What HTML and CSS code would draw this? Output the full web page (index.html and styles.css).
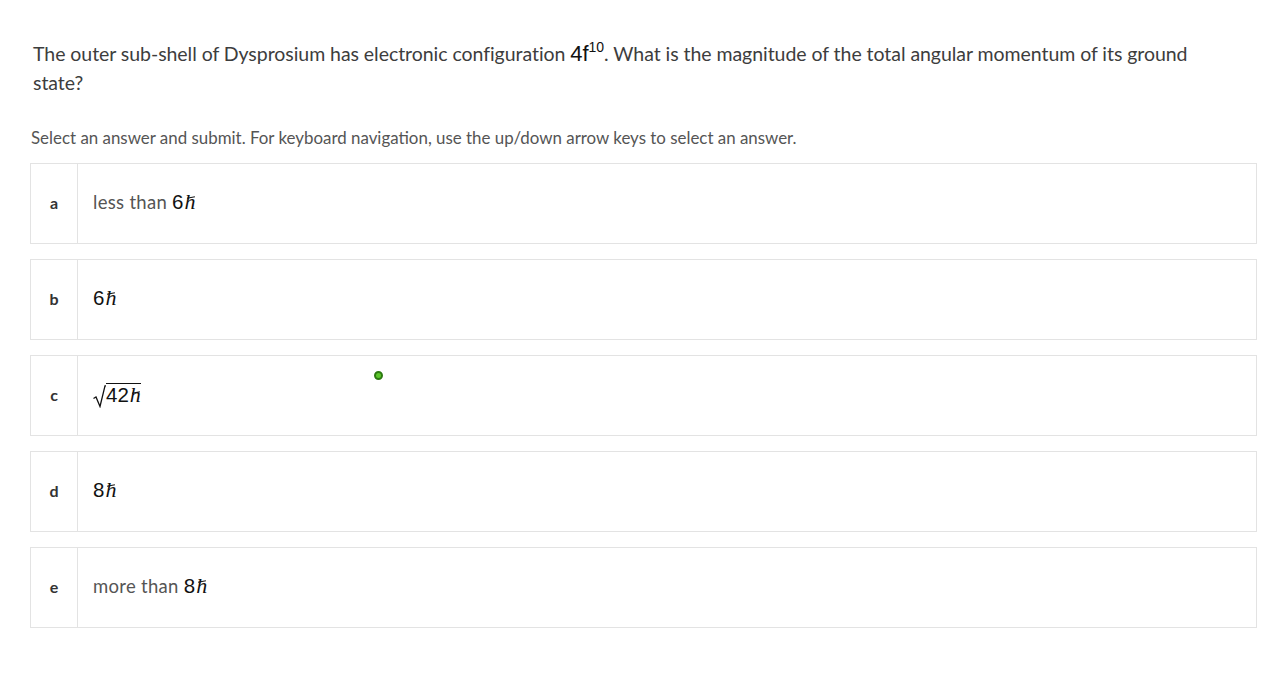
FILE: index.html
```html
<!DOCTYPE html>
<html>
<head>
<meta charset="utf-8">
<link rel="stylesheet" href="styles.css">
</head>
<body>
<div class="page">
  <p class="question">The outer sub-shell of Dysprosium has electronic configuration <span class="m-conf">4f<span class="sup">10</span></span>. What is the magnitude of the total angular momentum of its ground state?</p>
  <p class="hint">Select an answer and submit. For keyboard navigation, use the up/down arrow keys to select an answer.</p>
  <div class="answers">
    <div class="answer"><div class="label">a</div><div class="body">less than <span class="math"><span class="num">6</span><span class="hbar">h</span></span></div></div>
    <div class="answer"><div class="label">b</div><div class="body"><span class="math"><span class="num">6</span><span class="hbar">h</span></span></div></div>
    <div class="answer"><div class="label">c</div><div class="body"><span class="math"><svg class="radical" width="13" height="23" viewBox="0 0 13 23"><path d="M0.5 13.5 L3 12 L7 21.5 L12 0.8 L13 0.8" fill="none" stroke="#111" stroke-width="1.3"/></svg><span class="rad"><span class="num">42</span><span class="hbar">h</span></span></span></div></div>
    <div class="answer"><div class="label">d</div><div class="body"><span class="math"><span class="num">8</span><span class="hbar">h</span></span></div></div>
    <div class="answer"><div class="label">e</div><div class="body">more than <span class="math"><span class="num">8</span><span class="hbar">h</span></span></div></div>
  </div>
  <div class="cursor"></div>
</div>
</body>
</html>
```
FILE: styles.css
```css
* { box-sizing: border-box; }
html, body { margin: 0; padding: 0; background: #fff; }
body { font-family: Lato, "Open Sans", sans-serif; color: #444; }
.page { position: relative; padding: 39px 24px 0 30px; width: 1281px; height: 681px; }
.question { margin: 0 0 0 3px; font-size: 19.5px; line-height: 29px; color: #3d3d3d; width: 1200px; letter-spacing: -0.05px; }
.m-conf { font-family: "Liberation Sans", sans-serif; font-size: 22px; line-height: 20px; color: #111; display: inline-block; }
.m-conf .sup { display: inline-block; font-size: 14px; line-height: 14px; vertical-align: 9px; }
.hint { margin: 31px 0 15px 1px; font-size: 16.9px; line-height: 20px; color: #555; }
.answers { display: flex; flex-direction: column; gap: 15px; width: 1227px; }
.answer { display: flex; height: 81px; border: 1px solid #e3e3e3; }
.label { width: 47px; border-right: 1px solid #e3e3e3; display: flex; align-items: center; justify-content: center; font-size: 16px; font-weight: 700; color: #333; padding-bottom: 2px; }
.body { display: flex; align-items: center; padding-left: 15px; font-size: 18.5px; letter-spacing: 0.3px; color: #555; white-space: pre; padding-bottom: 3px; }
.math { font-family: "Liberation Sans", sans-serif; font-size: 20.5px; letter-spacing: 0; color: #111; display: inline-flex; align-items: baseline; }
.hbar { position: relative; font-family: "Liberation Serif", "DejaVu Serif", serif; font-style: italic; font-weight: 400; font-size: 22px; margin-left: 1px; }
.hbar::after { content: ""; position: absolute; left: 2px; top: 8px; width: 8px; height: 1.2px; background: #111; transform: rotate(-12deg); }
.radical { align-self: flex-end; margin-bottom: -3px; }
.rad { border-top: 1.3px solid #111; line-height: 21px; display: inline-flex; align-items: baseline; }
.cursor { position: absolute; left: 374px; top: 371px; width: 9px; height: 9px; border-radius: 50%; background: #5cc72b; border: 2px solid #2d7a12; }
```
